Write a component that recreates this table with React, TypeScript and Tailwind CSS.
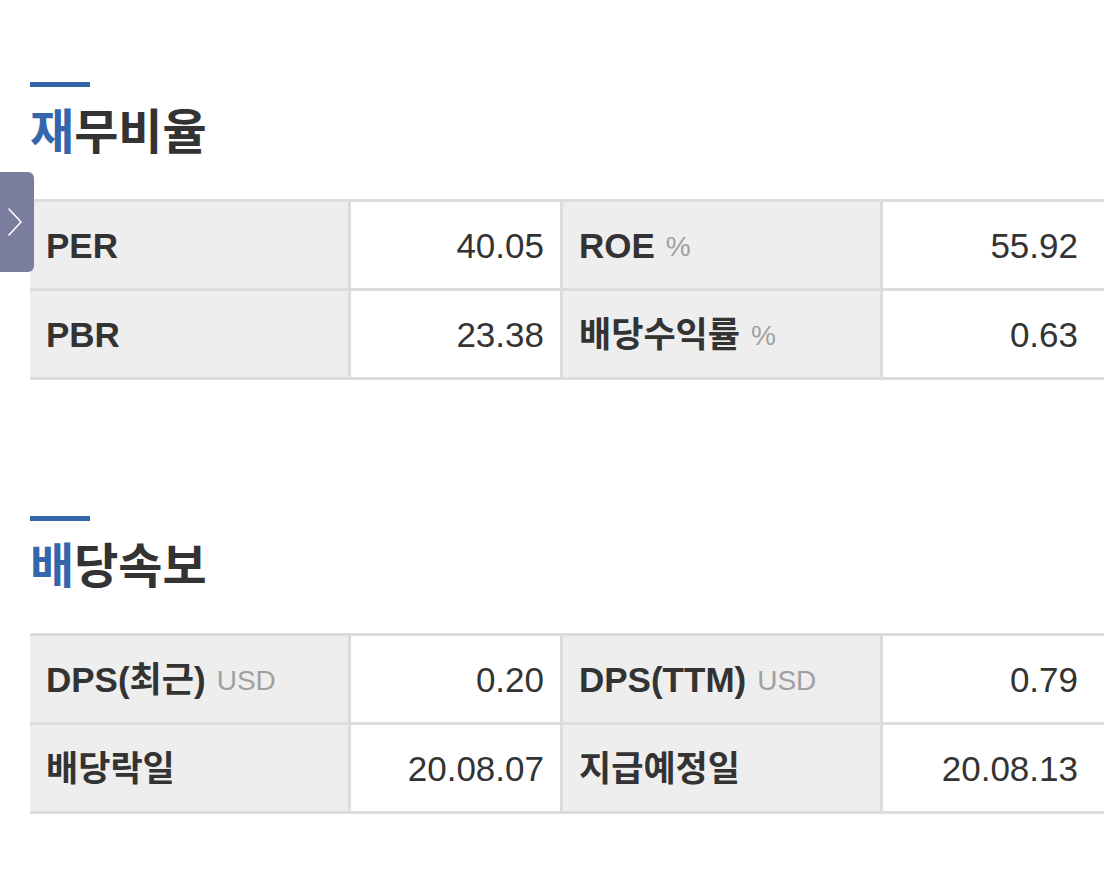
import { Fragment } from "react"

type Cell = { label: string; unit?: string; value: string }

const ratios: Cell[][] = [
  [
    { label: "PER", value: "40.05" },
    { label: "ROE", unit: "%", value: "55.92" },
  ],
  [
    { label: "PBR", value: "23.38" },
    { label: "배당수익률", unit: "%", value: "0.63" },
  ],
]

const dividends: Cell[][] = [
  [
    { label: "DPS(최근)", unit: "USD", value: "0.20" },
    { label: "DPS(TTM)", unit: "USD", value: "0.79" },
  ],
  [
    { label: "배당락일", value: "20.08.07" },
    { label: "지급예정일", value: "20.08.13" },
  ],
]

function Section({ title, rows }: { title: string; rows: Cell[][] }) {
  return (
    <section className="pl-[30px]">
      <div className="h-[5px] w-[60px] bg-[#3366ab]" />
      <h2 className="mt-[21px] text-[48px] font-bold leading-[50px] text-[#333]">
        <span className="text-[#3366ab]">{title[0]}</span>
        {title.slice(1)}
      </h2>
      <div className="mt-[41px] grid grid-cols-[318px_209px_317px_1fr] gap-[3px] bg-[#dcdcdc] py-[3px]">
        {rows.map((row, i) => (
          <Fragment key={i}>
            {row.map((cell, j) => (
              <Fragment key={cell.label}>
                <div className="flex h-[86px] items-center bg-[#eeeeee] pl-4 pt-[3px]">
                  <span className="text-[35px] font-bold text-[#333]">{cell.label}</span>
                  {cell.unit && (
                    <span className="ml-[11px] text-[28px] font-light text-[#a0a0a0]">{cell.unit}</span>
                  )}
                </div>
                <div
                  className={
                    j === 1
                      ? "flex h-[86px] items-center justify-end bg-white pr-[26px] pt-[2px] text-[35px] text-[#333]"
                      : "flex h-[86px] items-center justify-end bg-white pr-[16px] pt-[2px] text-[35px] text-[#333]"
                  }
                >
                  {cell.value}
                </div>
              </Fragment>
            ))}
          </Fragment>
        ))}
      </div>
    </section>
  )
}

export default function App() {
  return (
    <div
      className="relative min-h-[877px] bg-white pt-[82px]"
      style={{ fontFamily: '"Liberation Sans", "Noto Sans CJK KR", sans-serif' }}
    >
      <Section title="재무비율" rows={ratios} />
      <div className="h-[136px]" />
      <Section title="배당속보" rows={dividends} />

      {/* side drawer handle */}
      <button className="absolute left-0 top-[172px] flex h-[100px] w-[34px] items-center justify-center rounded-r-[6px] bg-[#7b7d9e] pr-[4px]">
        <svg width="16" height="30" viewBox="0 0 16 30" fill="none">
          <polyline points="2,2 14,15 2,28" stroke="white" strokeWidth="1.6" strokeLinecap="round" strokeLinejoin="round" />
        </svg>
      </button>
    </div>
  )
}
